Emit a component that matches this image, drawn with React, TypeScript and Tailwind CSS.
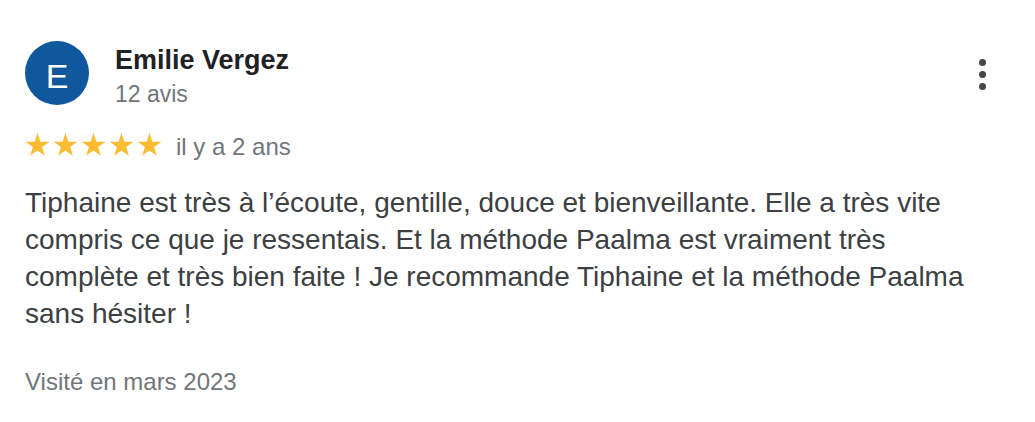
import React from "react";

function Star() {
  return (
    <svg width="25" height="23" viewBox="0 0 25 23" className="block shrink-0">
      <path
        fill="#fbbc2f"
        d="M12.5 0 L15.33 8.71 L24.48 8.71 L17.07 14.09 L19.91 22.79 L12.5 17.41 L5.09 22.79 L7.93 14.09 L0.52 8.71 L9.67 8.71 Z"
      />
    </svg>
  );
}

export default function App() {
  return (
    <div
      className="w-[1035px] h-[422px] bg-white relative"
      style={{ fontFamily: '"Liberation Sans", Arial, sans-serif' }}
    >
      <div className="pl-[25px] pr-[25px] pt-[41px]">
        <div className="flex items-start">
          <div className="w-[64px] h-[64px] rounded-full bg-[#0f589d] flex items-center justify-center pt-[6px] text-white text-[34px] leading-[34px] shrink-0">
            E
          </div>
          <div className="ml-[26px] flex-1 pt-[4px]">
            <div className="text-[27px] font-bold text-[#202124] leading-[30px]">
              Emilie Vergez
            </div>
            <div className="text-[23px] text-[#70757a] leading-[28px] mt-[5px]">
              12 avis
            </div>
          </div>
          <div className="flex flex-col items-center gap-[5px] mt-[18px] mr-[24px]">
            <span className="w-[7px] h-[7px] rounded-full bg-[#444746]" />
            <span className="w-[7px] h-[7px] rounded-full bg-[#444746]" />
            <span className="w-[7px] h-[7px] rounded-full bg-[#444746]" />
          </div>
        </div>
        <div className="flex items-start mt-[25px] h-[28px]">
          <div className="flex gap-[3px]">
            <Star />
            <Star />
            <Star />
            <Star />
            <Star />
          </div>
          <span className="ml-[14px] text-[24px] text-[#70757a] leading-[28px]">
            il y a 2 ans
          </span>
        </div>
        <p className="mt-[23px] text-[28px] leading-[37px] text-[#3c4043] w-[990px] whitespace-nowrap">
          Tiphaine est très à l’écoute, gentille, douce et bienveillante. Elle a
          très vite
          <br />
          compris ce que je ressentais. Et la méthode Paalma est vraiment très
          <br />
          complète et très bien faite ! Je recommande Tiphaine et la méthode
          Paalma
          <br />
          sans hésiter !
        </p>
        <div className="mt-[36px] text-[24px] text-[#70757a] leading-[28px]">
          Visité en mars 2023
        </div>
      </div>
    </div>
  );
}
